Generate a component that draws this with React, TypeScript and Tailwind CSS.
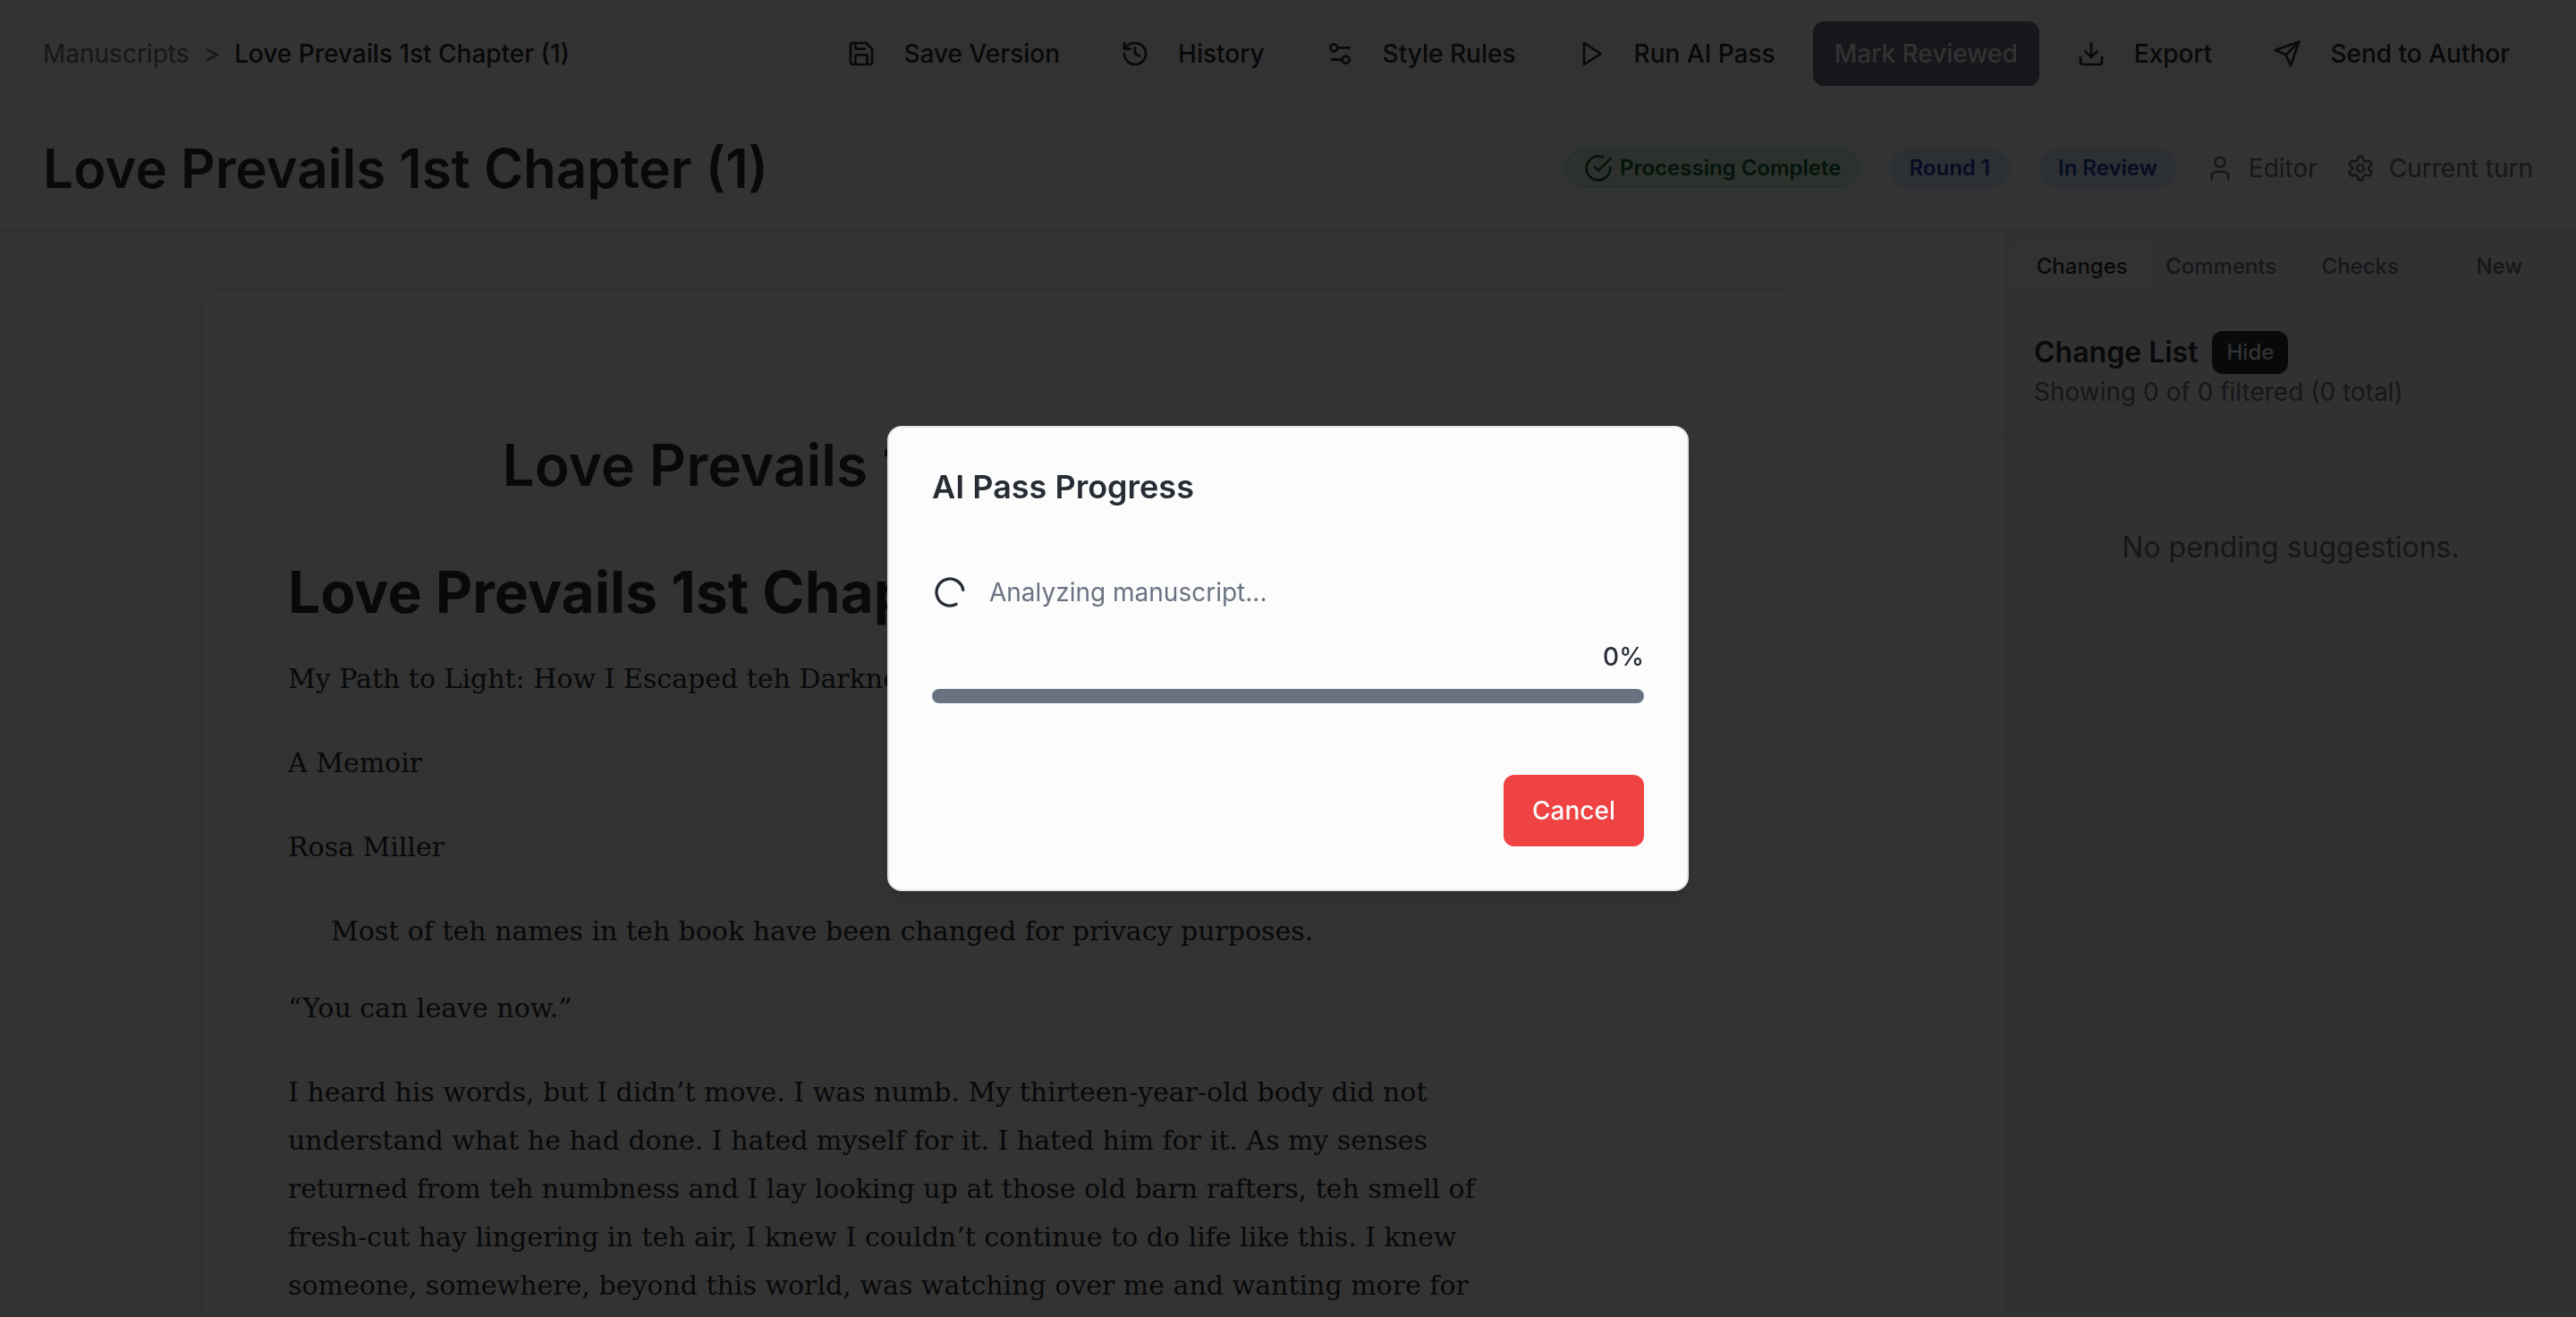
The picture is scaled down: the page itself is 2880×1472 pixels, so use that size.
import type { ReactNode } from "react";
import { Download, History, LoaderCircle, Save, User } from "lucide-react";

const TITLE = "Love Prevails 1st Chapter (1)";

function Icon({ children }: { children: ReactNode }) {
  return (
    <svg
      aria-hidden="true"
      viewBox="0 0 24 24"
      fill="none"
      stroke="currentColor"
      strokeWidth="2"
      strokeLinecap="round"
      strokeLinejoin="round"
      className="size-8"
    >
      {children}
    </svg>
  );
}

const SlidersIcon = () => (
  <Icon>
    <path d="M20 7h-9" />
    <path d="M14 17H5" />
    <circle cx="17" cy="17" r="3" />
    <circle cx="7" cy="7" r="3" />
  </Icon>
);

const PlayIcon = () => (
  <Icon>
    <polygon points="6 3 20 12 6 21 6 3" />
  </Icon>
);

const SendIcon = () => (
  <Icon>
    <path d="m22 2-7 20-4-9-9-4Z" />
    <path d="M22 2 11 13" />
  </Icon>
);

const CheckIcon = () => (
  <Icon>
    <path d="M22 11.08V12a10 10 0 1 1-5.93-9.14" />
    <path d="m9 11 3 3L22 4" />
  </Icon>
);

const GearIcon = () => (
  <Icon>
    <path d="M12.22 2h-.44a2 2 0 0 0-2 2v.18a2 2 0 0 1-1 1.73l-.43.25a2 2 0 0 1-2 0l-.15-.08a2 2 0 0 0-2.73.73l-.22.38a2 2 0 0 0 .73 2.73l.15.1a2 2 0 0 1 1 1.72v.51a2 2 0 0 1-1 1.74l-.15.09a2 2 0 0 0-.73 2.73l.22.38a2 2 0 0 0 2.73.73l.15-.08a2 2 0 0 1 2 0l.43.25a2 2 0 0 1 1 1.73V20a2 2 0 0 0 2 2h.44a2 2 0 0 0 2-2v-.18a2 2 0 0 1 1-1.73l.43-.25a2 2 0 0 1 2 0l.15.08a2 2 0 0 0 2.73-.73l.22-.39a2 2 0 0 0-.73-2.73l-.15-.08a2 2 0 0 1-1-1.74v-.5a2 2 0 0 1 1-1.74l.15-.09a2 2 0 0 0 .73-2.73l-.22-.38a2 2 0 0 0-2.73-.73l-.15.08a2 2 0 0 1-2 0l-.43-.25a2 2 0 0 1-1-1.73V4a2 2 0 0 0-2-2z" />
    <circle cx="12" cy="12" r="3" />
  </Icon>
);

function ActionButton({ icon, children }: { icon: ReactNode; children: ReactNode }) {
  return (
    <button
      type="button"
      className="flex h-[72px] items-center gap-8 rounded-xl border-2 border-[#f5f5f6] bg-[#fafafa] px-6 text-[28px] leading-10 font-medium whitespace-nowrap"
    >
      {icon}
      {children}
    </button>
  );
}

function Pill({ children }: { children: ReactNode }) {
  return (
    <span className="rounded-full border-2 border-blue-100 bg-blue-100 px-5 py-1 text-2xl leading-8 font-semibold whitespace-nowrap text-[#1e40af]">
      {children}
    </span>
  );
}

function Header() {
  return (
    <header className="border-b-2 border-[#e5e7eb] bg-[#fcfcfc] px-12 pt-6 pb-8">
      <div className="flex items-center justify-between">
        <nav aria-label="Breadcrumb" className="flex items-center gap-4 text-[28px] leading-10 whitespace-nowrap">
          <a href="#manuscripts" className="text-gray-500">
            Manuscripts
          </a>
          <span className="text-gray-500">&gt;</span>
          <span className="font-medium">{TITLE}</span>
        </nav>
        <div className="flex items-center gap-4">
          <ActionButton icon={<Save className="size-8" />}>Save Version</ActionButton>
          <ActionButton icon={<History className="size-8" />}>History</ActionButton>
          <ActionButton icon={<SlidersIcon />}>Style Rules</ActionButton>
          <ActionButton icon={<PlayIcon />}>Run AI Pass</ActionButton>
          <button
            type="button"
            className="h-[72px] rounded-xl bg-gray-500 px-6 text-[28px] leading-10 font-medium whitespace-nowrap text-[#fafafa]"
          >
            Mark Reviewed
          </button>
          <ActionButton icon={<Download className="size-8" />}>Export</ActionButton>
          <ActionButton icon={<SendIcon />}>Send to Author</ActionButton>
        </div>
      </div>
      <div className="mt-14 flex items-center justify-between">
        <h1 className="text-[60px] leading-[72px] font-semibold">{TITLE}</h1>
        <div className="flex items-center gap-8 text-[28px] leading-10 whitespace-nowrap text-gray-500">
          <span className="flex items-center gap-2 rounded-full border-2 border-[#bfeed3] bg-[#d9f2e3] px-5 py-1 text-2xl leading-8 font-semibold text-[#166534]">
            <CheckIcon />
            Processing Complete
          </span>
          <Pill>Round 1</Pill>
          <Pill>In Review</Pill>
          <span className="flex items-center gap-4">
            <User className="size-8" />
            Editor
          </span>
          <span className="flex items-center gap-4">
            <GearIcon />
            Current turn
          </span>
        </div>
      </div>
    </header>
  );
}

function Manuscript() {
  return (
    <main className="min-w-0 flex-1 overflow-hidden bg-[#fcfcfc] px-16 pt-16">
      <article className="mx-auto h-full max-w-[1792px] rounded-t-3xl border-2 border-b-0 border-[#e9eaed] px-24 pt-40">
        <div className="max-w-[1344px] text-[64px]">
          <h2 className="text-center leading-[72px] font-semibold">{TITLE}</h2>
          <h2 className="mt-[76px] leading-[60px] font-bold">{TITLE}</h2>
        </div>
        <div className="max-w-[1344px] font-['DejaVu_Serif',serif] text-[30px] leading-[54px]">
          <p className="mt-10">My Path to Light: How I Escaped teh Darkness</p>
          <p className="mt-10">A Memoir</p>
          <p className="mt-10">Rosa Miller</p>
          <p className="mt-10 pl-12">Most of teh names in teh book have been changed for privacy purposes.</p>
          <p className="mt-8">“You can leave now.”</p>
          <p className="mt-10">
            I heard his words, but I didn’t move. I was numb. My thirteen-year-old body did not understand what he had
            done. I hated myself for it. I hated him for it. As my senses returned from teh numbness and I lay looking up
            at those old barn rafters, teh smell of fresh-cut hay lingering in teh air, I knew I couldn’t continue to do
            life like this. I knew someone, somewhere, beyond this world, was watching over me and wanting more for
          </p>
        </div>
      </article>
    </main>
  );
}

const TABS = ["Changes", "Comments", "Checks", "New"];

function Sidebar() {
  return (
    <aside className="w-[640px] shrink-0 border-l-2 border-[#e9eaed] bg-[#f6f6f7]">
      <div role="tablist" className="grid grid-cols-4 px-2 py-3">
        {TABS.map((tab, i) => (
          <button
            key={tab}
            type="button"
            role="tab"
            aria-selected={i === 0}
            className={
              i === 0
                ? "h-14 rounded-lg bg-[#fafafa] text-2xl font-medium shadow-xs"
                : "h-14 rounded-lg text-2xl font-medium text-gray-500"
            }
          >
            {tab}
          </button>
        ))}
      </div>
      <div className="border-b-2 border-[#eff0f2] p-8">
        <div className="flex items-center gap-4">
          <h2 className="text-[32px] leading-12 font-semibold">Change List</h2>
          <button type="button" className="h-12 rounded-xl bg-[#272d35] px-4 text-2xl font-medium text-[#fafafa]">
            Hide
          </button>
        </div>
        <p className="text-[28px] leading-10 text-gray-500">Showing 0 of 0 filtered (0 total)</p>
      </div>
      <p className="py-24 text-center text-[32px] leading-12 text-gray-500">No pending suggestions.</p>
    </aside>
  );
}

function ProgressDialog() {
  return (
    <div className="fixed inset-0 flex items-center justify-center bg-black/80">
      <div
        role="dialog"
        aria-modal="true"
        aria-labelledby="progress-title"
        className="flex w-full max-w-[896px] flex-col gap-20 rounded-2xl border-2 border-gray-200 bg-[#fcfcfc] p-12 shadow-xl"
      >
        <h2 id="progress-title" className="text-4xl leading-9 font-semibold">
          AI Pass Progress
        </h2>
        <div className="flex flex-col text-[28px] leading-10">
          <div className="flex items-center gap-6 text-gray-500">
            <LoaderCircle className="size-10 rotate-[62deg] text-[#272d35]" />
            Analyzing manuscript...
          </div>
          <div className="mt-8 text-right font-medium">0%</div>
          <div
            role="progressbar"
            aria-labelledby="progress-title"
            aria-valuenow={0}
            aria-valuemin={0}
            aria-valuemax={100}
            className="mt-4 h-4 rounded-full bg-gray-500"
          />
        </div>
        <div className="flex justify-end">
          <button
            type="button"
            className="h-20 rounded-xl bg-[#ef4343] px-8 text-[28px] leading-10 font-medium text-[#fafafa]"
          >
            Cancel
          </button>
        </div>
      </div>
    </div>
  );
}

export default function App() {
  return (
    <div className="flex h-screen flex-col overflow-hidden bg-[#fcfcfc] font-['Inter',sans-serif] text-[#272d35]">
      <Header />
      <div className="flex min-h-0 flex-1">
        <Manuscript />
        <Sidebar />
      </div>
      <ProgressDialog />
    </div>
  );
}
